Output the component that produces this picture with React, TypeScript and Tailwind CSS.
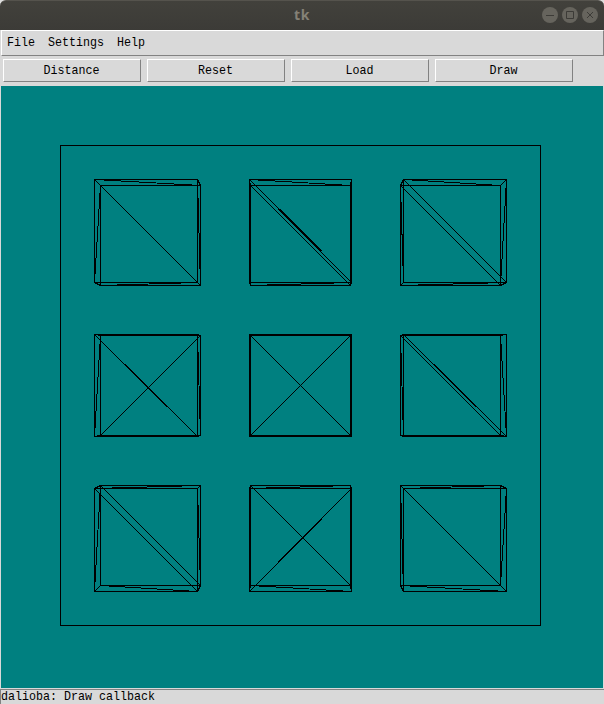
import React from "react";

type Span = [number, number];

// Near and far face extents of each column / row of cubes.
const nearX: Span[] = [[94, 197], [249, 351], [403, 506]];
const farX: Span[] = [[100, 200], [250, 350], [400, 500]];
const nearY: Span[] = [[179, 282], [334, 436], [488, 591]];
const farY: Span[] = [[185, 285], [335, 435], [485, 585]];

// Direction of the face diagonals, per cube: "d" falls to the right, "u" rises.
const nearDiag = ["d", "d", "d", "d", "d", "d", "d", "u", "d"];
const farDiag = ["d", "d", "d", "u", "u", "d", "d", "d", "d"];

const line = (x1: number, y1: number, x2: number, y2: number) =>
  `M${x1 + 0.5} ${y1 + 0.5}L${x2 + 0.5} ${y2 + 0.5}`;

const box = ([l, r]: Span, [t, b]: Span) =>
  `M${l + 0.5} ${t + 0.5}H${r + 0.5}V${b + 0.5}H${l + 0.5}Z`;

function cubePath(i: number) {
  const c = i % 3;
  const r = Math.floor(i / 3);
  const [al, ar] = nearX[c];
  const [at, ab] = nearY[r];
  const [bl, br] = farX[c];
  const [bt, bb] = farY[r];
  return [
    box(nearX[c], nearY[r]),
    box(farX[c], farY[r]),
    line(al, at, bl, bt),
    line(ar, at, br, bt),
    line(al, ab, bl, bb),
    line(ar, ab, br, bb),
    line(al, at, br, bt),
    line(bl, bb, ar, ab),
    line(bl, bt, al, ab),
    i === 5 ? line(br, bt, ar, ab) : line(ar, at, br, bb),
    nearDiag[i] === "d" ? line(al, at, ar, ab) : line(al, ab, ar, at),
    farDiag[i] === "d" ? line(bl, bt, br, bb) : line(bl, bb, br, bt),
  ].join("");
}

// Stretches where two passes of the same diagonal land one pixel apart.
const doubled = [
  line(279, 209, 321, 251) + line(280, 209, 322, 251),
  line(125, 364, 167, 406) + line(125, 365, 166, 406),
  line(434, 364, 476, 406) + line(434, 365, 475, 406),
  line(279, 561, 321, 519) + line(279, 560, 321, 518),
].join("");

const mono = "font-['Liberation_Mono','DejaVu_Sans_Mono',monospace] text-[11.67px] leading-none text-black whitespace-pre";

function WindowButton({ children }: { children: React.ReactNode }) {
  return (
    <svg width="16" height="16" viewBox="0 0 16 16" fill="none" stroke="#3c3b37" strokeWidth="1">
      <circle cx="8" cy="8" r="8" fill="#66645d" stroke="none" />
      {children}
    </svg>
  );
}

function Label({ children }: { children: React.ReactNode }) {
  return <span className="inline-block scale-y-112">{children}</span>;
}

export default function App() {
  return (
    <div className="flex h-[704px] w-[604px] flex-col overflow-hidden bg-[#d9d9d9]">
      <div className="bg-[#dedede]">
        <header className="grid h-[30px] grid-cols-[1fr_auto_1fr] items-center rounded-t-[6px] border-t border-[#55534d] bg-linear-to-b from-[#42413c] to-[#3c3b37] pr-1.5 pb-px">
          <span />
          <span className="pl-1.5 font-['Open_Sans','Noto_Sans',sans-serif] text-[14px] leading-none font-bold tracking-[0.5px] text-[#858176]">tk</span>
          <div className="flex justify-end gap-1">
            <WindowButton><path d="M4 8.5H12" /></WindowButton>
            <WindowButton><path d="M4.5 4.5H11.5V11.5H4.5Z" /></WindowButton>
            <WindowButton><path d="M5 5L11 11M11 5L5 11" /></WindowButton>
          </div>
        </header>
      </div>
      <nav className={`ml-px flex h-[26px] items-center gap-[13px] border border-t-white border-r-[#828282] border-b-[#828282] border-l-white pl-[5px] pt-px ${mono}`}>
        <Label>File</Label>
        <Label>Settings</Label>
        <Label>Help</Label>
      </nav>
      <div className="flex h-[30px] gap-1.5 pt-[3px] pl-[3px]">
        {["Distance", "Reset", "Load", "Draw"].map((label) => (
          <button
            key={label}
            className={`flex h-[23px] w-[138px] items-center justify-center border border-t-white border-r-[#828282] border-b-[#828282] border-l-white pt-0.5 pr-px ${mono}`}
          >
            <Label>{label}</Label>
          </button>
        ))}
      </div>
      <svg className="ml-px block shrink-0 bg-[#008080]" width="602" height="602" viewBox="1 86 602 602" fill="none" stroke="#000" strokeWidth="1" shapeRendering="crispEdges">
        <path d={box([60, 540], [145, 625])} />
        {nearDiag.map((_, i) => (
          <path key={i} d={cubePath(i)} />
        ))}
        <path d={doubled} />
      </svg>
      <footer className={`mt-px flex h-[15px] items-center border-t border-l border-[#828282] pt-px ${mono}`}>
        <Label>dalioba: Draw callback</Label>
      </footer>
    </div>
  );
}
